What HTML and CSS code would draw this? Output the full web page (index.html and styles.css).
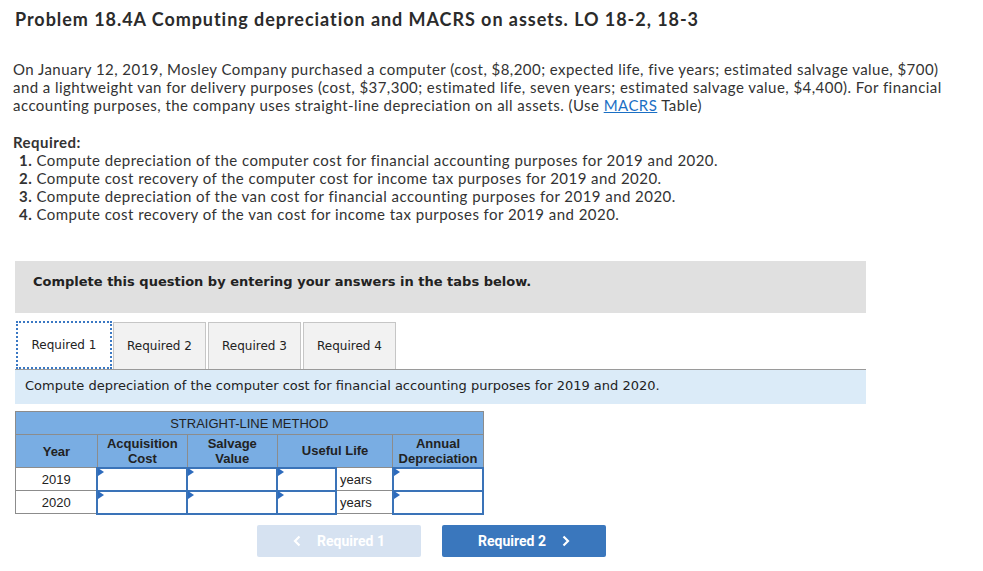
FILE: index.html
```html
<!DOCTYPE html>
<html>
<head>
<meta charset="utf-8">
<link rel="stylesheet" href="styles.css">
</head>
<body>
<div class="page">
  <h1 class="title">Problem 18.4A Computing depreciation and MACRS on assets. LO 18-2, 18-3</h1>
  <p class="intro">On January 12, 2019, Mosley Company purchased a computer (cost, $8,200; expected life, five years; estimated salvage value, $700)<br>and a lightweight van for delivery purposes (cost, $37,300; estimated life, seven years; estimated salvage value, $4,400). For financial<br>accounting purposes, the company uses straight-line depreciation on all assets. (Use <a class="link" href="#">MACRS</a> Table)</p>
  <div class="required">
    <div class="req-title">Required:</div>
    <ol class="req-list">
      <li><b>1.</b> Compute depreciation of the computer cost for financial accounting purposes for 2019 and 2020.</li>
      <li><b>2.</b> Compute cost recovery of the computer cost for income tax purposes for 2019 and 2020.</li>
      <li><b>3.</b> Compute depreciation of the van cost for financial accounting purposes for 2019 and 2020.</li>
      <li><b>4.</b> Compute cost recovery of the van cost for income tax purposes for 2019 and 2020.</li>
    </ol>
  </div>

  <div class="notice">Complete this question by entering your answers in the tabs below.</div>

  <div class="tabs">
    <div class="tab active">Required 1</div>
    <div class="tab">Required 2</div>
    <div class="tab">Required 3</div>
    <div class="tab">Required 4</div>
  </div>
  <div class="instruction">Compute depreciation of the computer cost for financial accounting purposes for 2019 and 2020.</div>

  <table class="grid">
    <tr><th colspan="6" class="cap">STRAIGHT-LINE METHOD</th></tr>
    <tr class="hdr">
      <th class="c-year">Year</th>
      <th class="c-acq">Acquisition<br>Cost</th>
      <th class="c-sal">Salvage<br>Value</th>
      <th colspan="2">Useful Life</th>
      <th class="c-ann">Annual<br>Depreciation</th>
    </tr>
    <tr>
      <td class="year">2019</td>
      <td class="in"><span class="flag"></span></td>
      <td class="in"><span class="flag"></span></td>
      <td class="in c-life"><span class="flag"></span></td>
      <td class="unit">years</td>
      <td class="in"><span class="flag"></span></td>
    </tr>
    <tr>
      <td class="year">2020</td>
      <td class="in"><span class="flag"></span></td>
      <td class="in"><span class="flag"></span></td>
      <td class="in c-life"><span class="flag"></span></td>
      <td class="unit">years</td>
      <td class="in"><span class="flag"></span></td>
    </tr>
  </table>

  <div class="nav">
    <div class="btn prev"><svg class="chev" width="8" height="12" viewBox="0 0 8 12"><path d="M6.5 1.5 L2 6 L6.5 10.5" fill="none" stroke="#fff" stroke-width="2.2"/></svg><span>Required 1</span></div>
    <div class="btn next"><span>Required 2</span><svg class="chev" width="8" height="12" viewBox="0 0 8 12"><path d="M1.5 1.5 L6 6 L1.5 10.5" fill="none" stroke="#fff" stroke-width="2.2"/></svg></div>
  </div>
</div>
</body>
</html>
```
FILE: styles.css
```css
* { box-sizing: border-box; }
body {
  margin: 0;
  background: #fff;
  color: #333;
  font-family: Lato, "Liberation Sans", sans-serif;
}
.page {
  padding: 8px 0 0 15px;
  width: 983px;
}
.title {
  margin: 0;
  font-size: 18px;
  letter-spacing: 0.95px;
  font-weight: 700;
  color: #2b2b2b;
  line-height: 22px;
}
.intro {
  margin: 30px 0 0 -2px;
  font-size: 15px;
  letter-spacing: 0.45px;
  line-height: 18px;
  color: #333;
}
.link { color: #1a6fc4; text-decoration: underline; }
.required { margin-top: 19px; font-size: 15px; letter-spacing: 0.45px; line-height: 18px; }
.req-title { font-weight: 700; margin-left: -2px; }
.req-list { list-style: none; margin: 0; padding: 0 0 0 4px; }
.req-list b { font-weight: 700; }

.notice {
  margin-top: 38px;
  width: 851px;
  height: 52px;
  background: #e0e0e0;
  font-family: "DejaVu Sans", Verdana, sans-serif;
  font-weight: 700;
  font-size: 13px;
  color: #222;
  padding: 13px 0 0 18px;
}
.tabs {
  display: flex;
  margin-top: 8px;
  height: 48px;
  align-items: flex-end;
}
.tab {
  width: 93px;
  height: 47px;
  margin-right: 2px;
  background: #f2f2f2;
  border: 1px solid #c6c6c6;
  border-bottom: none;
  font-family: "DejaVu Sans", Verdana, sans-serif;
  font-size: 12px;
  color: #222;
  display: flex;
  align-items: center;
  justify-content: center;
}
.tab.active {
  width: 96px;
  height: 48px;
  margin-left: 1px;
  margin-right: 1px;
  background: #fff;
  border: 2px dotted #3a78c3;
}
.instruction {
  width: 851px;
  height: 35px;
  background: #dbebf8;
  border-top: 1px solid #9a9a9a;
  font-family: "DejaVu Sans", Verdana, sans-serif;
  font-size: 13px;
  color: #222;
  padding: 8px 0 0 10px;
}
.grid {
  margin-top: 7px;
  border-collapse: collapse;
  font-family: "Liberation Sans", Arial, sans-serif;
  font-size: 13px;
  color: #222;
  width: 469px;
}
.grid th, .grid td {
  border: 1px solid #8c8c8c;
  padding: 0;
  text-align: center;
}
.grid th {
  background: #79ade3;
  font-weight: 700;
  line-height: 15px;
}
.grid th.cap {
  font-weight: 400;
  height: 23px;
}
.grid tr.hdr th { height: 33px; }
.c-year { width: 82px; }
.c-acq { width: 90px; }
.c-sal { width: 90px; }
.c-life { width: 59px; }
.c-ann { width: 90px; }
.grid td { height: 23px; background: #fff; }
.grid td.in {
  border: 2px solid #3a73b8;
  position: relative;
}
.grid td.unit { text-align: left; padding-left: 3px; width: 57px; }
.flag {
  position: absolute;
  left: 0;
  top: 0;
  width: 0;
  height: 0;
  border-top: 4px solid transparent;
  border-bottom: 4px solid transparent;
  border-left: 6px solid #2d6bbd;
  transform: translateY(-1px);
}
.nav {
  display: flex;
  gap: 21px;
  margin: 10px 0 0 242px;
}
.btn {
  width: 164px;
  height: 32px;
  border-radius: 2px;
  color: #fff;
  font-family: Roboto, "Liberation Sans", sans-serif;
  font-weight: 700;
  font-size: 14px;
  display: flex;
  align-items: center;
  justify-content: center;
  gap: 16px;
}
.prev { background: #d6e2f1; }
.next { background: #3a77bd; }
```
